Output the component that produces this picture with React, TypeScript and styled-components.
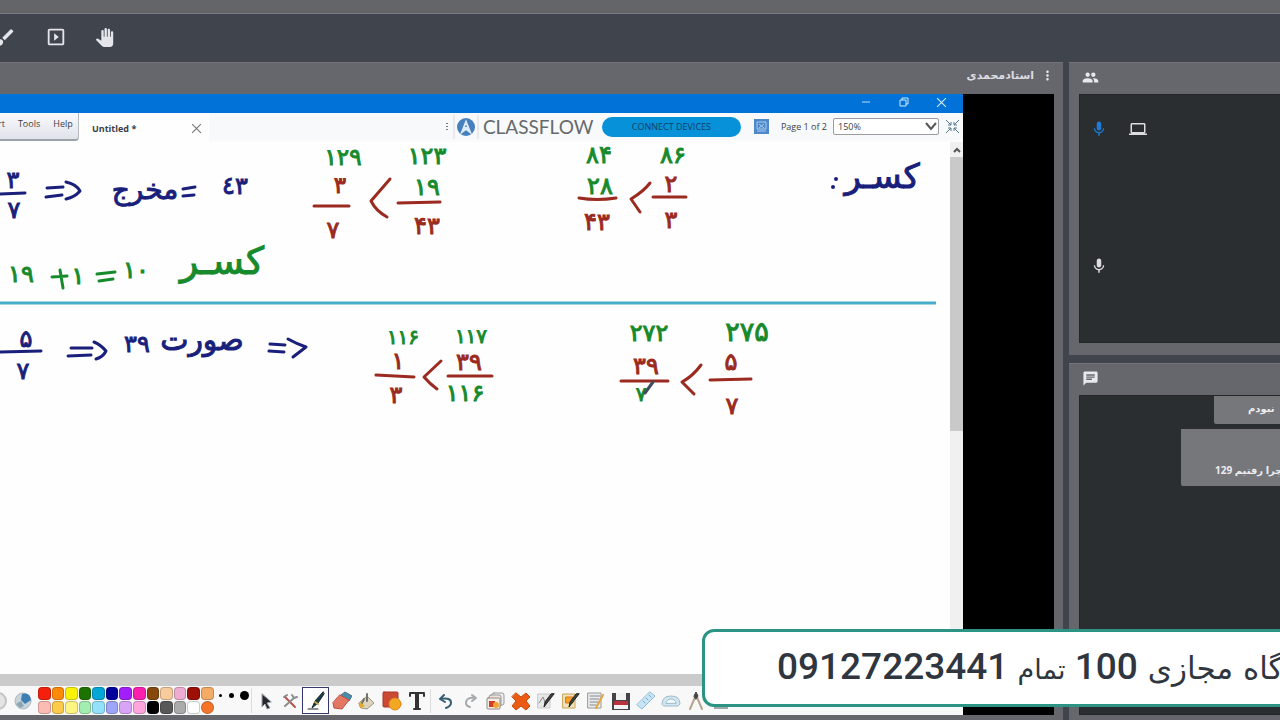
import React from 'react';
import styled, { createGlobalStyle } from 'styled-components';
import { MdBrush, MdSlideshow, MdPanTool, MdMoreVert, MdPeople, MdMic, MdComputer, MdChat } from 'react-icons/md';

const Global = createGlobalStyle`
  * { box-sizing: border-box; }
  html, body, #root { height: 100%; }
  body { margin: 0; overflow: hidden; background: #40444c; font-family: "Open Sans", "DejaVu Sans", sans-serif; }
  button { font: inherit; color: inherit; background: none; border: 0; padding: 0; }
`;

const Page = styled.div`
  position: relative;
  height: 100%;
  display: flex;
  flex-direction: column;
  overflow: hidden;
`;
const TopStrip = styled.div`
  flex: none;
  height: 14px;
  background: #646569;
  border-bottom: 1px solid #777a80;
`;
const Header = styled.header`
  flex: none;
  height: 48px;
  display: flex;
  align-items: center;
  gap: 26px;
  padding-bottom: 2px;
  background: #40444c;
  overflow: hidden;
`;
const HeaderButton = styled.button`
  width: 22px;
  height: 22px;
  flex: none;
  display: flex;
  align-items: center;
  justify-content: center;
  color: #e4e6ec;
  font-size: 22px;
  &:first-child { margin-left: -6px; font-size: 23px; }
  &:nth-child(2) { margin-left: 3px; }
`;
const Main = styled.main`
  flex: 1;
  min-height: 0;
  display: flex;
  gap: 6px;
`;
const Pod = styled.section<{ $grow?: boolean; $h?: number }>`
  display: flex;
  flex-direction: column;
  min-width: 0;
  min-height: 0;
  flex: ${p => (p.$grow ? '1' : 'none')};
  ${p => (p.$h ? `height: ${p.$h}px;` : '')}
  background: #66676c;
  border-top: 1px solid #72747a;
`;
const PodHeader = styled.div<{ $end?: boolean }>`
  flex: none;
  height: 31px;
  display: flex;
  align-items: center;
  justify-content: ${p => (p.$end ? 'flex-end' : 'flex-start')};
  gap: 6px;
  padding: ${p => (p.$end ? '0 8px 6px 0' : '0 13px 2px')};
  color: #e8e8ee;
  font-size: 17px;
`;
const UserName = styled.span`
  font: 700 11px "DejaVu Sans", sans-serif;
  color: #dcdce2;
`;
const IconButton = styled.button`
  display: flex;
`;
const ShareBody = styled.div`
  flex: 1;
  min-height: 0;
  display: flex;
  margin: 0 9px 5px 0;
  background: #000;
`;
const Side = styled.aside`
  flex: none;
  width: 211px;
  display: flex;
  flex-direction: column;
  gap: 8px;
`;
const DarkBody = styled.div<{ $bottom: number }>`
  flex: 1;
  min-height: 0;
  margin: 0 0 ${p => p.$bottom}px 10px;
  background: #2b2e31;
  border: 1px solid #232629;
  border-right: 0;
  overflow: hidden;
`;
const Attendees = styled(DarkBody)`
  display: flex;
  flex-direction: column;
  gap: 119px;
  padding: 25px 10px;
`;
const Attendee = styled.div`
  display: flex;
  align-items: center;
  gap: 21px;
  height: 18px;
  color: #dddde0;
  font-size: 18px;
  .live { color: #1f7ad6; }
`;
const Messages = styled(DarkBody)`
  display: flex;
  flex-direction: column;
  align-items: flex-end;
  gap: 5px;
`;
const Message = styled.div<{ $w: number; $h: number }>`
  width: ${p => p.$w}px;
  height: ${p => p.$h}px;
  flex: none;
  display: flex;
  align-items: flex-end;
  padding: 0 0 7px 34px;
  background: #75777b;
  border-radius: 0 0 0 2px;
  color: #ececf0;
  font: 700 10px/18px "Open Sans", "DejaVu Sans", sans-serif;
  white-space: nowrap;
  overflow: hidden;
`;

const Board = styled.div`
  flex: 1;
  min-width: 0;
  margin-right: 91px;
  display: flex;
  flex-direction: column;
  background: #fefefe;
`;
const TitleBar = styled.div`
  flex: none;
  height: 19px;
  display: flex;
  align-items: center;
  justify-content: flex-end;
  gap: 26px;
  padding-right: 16px;
  padding-bottom: 3px;
  background: #0072d8;
  svg { display: block; }
`;
const MenuRow = styled.div`
  flex: none;
  height: 29px;
  display: flex;
  align-items: flex-start;
  background: #fbfbfc;
  color: #3c3f44;
`;
const Menus = styled.nav`
  width: 79px;
  height: 28px;
  flex: none;
  display: flex;
  align-items: flex-start;
  gap: 13px;
  padding-top: 3px;
  overflow: hidden;
  background: linear-gradient(#fafafc, #dfe3ea);
  border-right: 1px solid #b5b9c0;
  border-bottom: 2px solid #9da1aa;
  border-radius: 0 0 4px 0;
  font-size: 9px;
  line-height: 16px;
  button { flex: none; }
  button:first-child { margin-left: -2px; }
`;
const Tab = styled.div`
  width: 130px;
  flex: none;
  height: 29px;
  display: flex;
  align-items: center;
  justify-content: space-between;
  padding: 2px 7px 0 13px;
  background: #fefefe;
  font-size: 9px;
  font-weight: 700;
`;
const FlowBar = styled.div`
  flex: 1;
  height: 27px;
  display: flex;
  align-items: center;
  justify-content: flex-end;
  padding-right: 3px;
  background: #f8f9fb;
  font-size: 10px;
  svg { flex: none; }
`;
const Brand = styled.span`
  width: 122px;
  padding-left: 3px;
  font: 400 19px Lato, sans-serif;
  color: #66696c;
`;
const Connect = styled.button`
  width: 139px;
  height: 20px;
  flex: none;
  border-radius: 10px;
  background: #0791d8;
  color: #123f66;
  font-size: 9px;
  margin-right: 13px;
`;
const PageLabel = styled.label`
  margin: 0 6px 0 12px;
  font-size: 9px;
  white-space: nowrap;
`;
const ZoomWrap = styled.span`
  position: relative;
  display: flex;
  align-items: center;
  margin-right: 6px;
  svg { position: absolute; right: 1px; pointer-events: none; }
`;
const Zoom = styled.select`
  appearance: none;
  width: 106px;
  height: 17px;
  padding: 0 4px;
  border: 1px solid #9a9ca0;
  border-radius: 2px;
  background: #fff;
  color: #3c3f44;
  font: 9px "Open Sans", sans-serif;
`;
const CanvasRow = styled.div`
  flex: 1;
  min-height: 0;
  display: flex;
  overflow: hidden;
`;
const CanvasArea = styled.div`
  flex: 1;
  min-width: 0;
  overflow: hidden;
`;
const Ink = styled.svg`
  display: block;
  text { font-family: "DejaVu Sans", sans-serif; text-anchor: middle; }
`;
const Scroll = styled.div`
  width: 13px;
  flex: none;
  background: #f0f0f0;
`;
const ScrollUp = styled.button`
  width: 13px;
  height: 15px;
  display: flex;
  align-items: center;
  justify-content: center;
`;
const Thumb = styled.div`
  height: 274px;
  background: #c9c9c9;
`;
const GreyBar = styled.div`
  flex: none;
  height: 12px;
  background: #cbcbcb;
`;
const Tools = styled.div`
  flex: none;
  height: 29px;
  display: flex;
  align-items: center;
  background: #f8f8f8;
  overflow: hidden;
`;
const Worlds = styled.div`
  width: 45px;
  flex: none;
  display: flex;
  gap: 5px;
  margin-left: -12px;
  margin-right: 5px;
`;
const Palette = styled.div`
  width: 162px;
  flex: none;
  display: grid;
  grid-template-columns: repeat(12, 1fr);
  gap: 1px;
`;
const Swatch = styled.button<{ $c: string; $round?: boolean }>`
  height: 13px;
  border: 1px solid #0003;
  border-radius: ${p => (p.$round ? '7px' : '4px')};
  background: ${p => p.$c};
`;
const Current = styled.div`
  width: 13px;
  flex: none;
  display: grid;
  gap: 1px;
  margin-left: 1px;
`;
const Dots = styled.div`
  width: 38px;
  height: 25px;
  flex: none;
  display: flex;
  justify-content: space-between;
  padding: 0 2px 10px 5px;
  align-items: center;
  border-right: 1px solid #ddd;
`;
const Dot = styled.button<{ $s: number }>`
  width: ${p => p.$s}px;
  height: ${p => p.$s}px;
  border-radius: 50%;
  background: #000;
`;
const ToolButton = styled.button<{ $active?: boolean }>`
  width: ${p => (p.$active ? 27 : 25)}px;
  height: 27px;
  flex: none;
  display: flex;
  align-items: center;
  justify-content: center;
  border: 1px solid ${p => (p.$active ? '#34386a' : 'transparent')};
  background: ${p => (p.$active ? '#fff' : 'none')};
`;
const Split = styled.div`
  width: 2px;
  height: 24px;
  margin-right: 2px;
  flex: none;
  border-right: 1px solid #ddd;
`;
const Banner = styled.div`
  position: absolute;
  right: -20px;
  bottom: 13px;
  width: 598px;
  height: 78px;
  display: flex;
  align-items: center;
  padding: 0 0 4px 72px;
  border: 3px solid #2b9484;
  border-radius: 12px;
  background: #fff;
  color: #303640;
  font: 500 37px Roboto, "DejaVu Sans", sans-serif;
  white-space: nowrap;
  overflow: hidden;
`;
const BannerWord = styled.span<{ $size: number }>`
  font: 400 ${p => p.$size}px "DejaVu Sans", sans-serif;
`;

const NAVY = '#1a1f7c';
const RED = '#9b2a20';
const GREEN = '#178a2c';

type Note = [string, number, number, string, number?];
const notes: Note[] = [
  ['۳', 13, 188, NAVY], ['۷', 14, 218, NAVY],
  ['مخرج', 145, 199, NAVY, 28], ['٤٣', 235, 194, NAVY],
  ['۱۲۹', 343, 165, GREEN, 23], ['۱۲۳', 427, 164, GREEN, 24],
  ['۳', 340, 193, RED, 23], ['۷', 333, 238, RED],
  ['۱۹', 427, 195, GREEN], ['۴۳', 427, 234, RED],
  ['۸۴', 599, 163, GREEN], ['۲۸', 600, 194, GREEN], ['۴۳', 597, 230, RED],
  ['۸۶', 673, 163, GREEN], ['۲', 671, 192, RED], ['۳', 671, 228, RED],
  ['کسـر', 882, 188, NAVY, 34],
  ['۱۹', 21, 282, GREEN], ['۱', 78, 284, GREEN], ['۱۰', 136, 278, GREEN],
  ['کسـر', 222, 274, GREEN, 38],
  ['۵', 26, 347, NAVY], ['۷', 23, 379, NAVY],
  ['۳۹', 137, 352, NAVY], ['صورت', 202, 350, NAVY, 30],
  ['۱۱۶', 403, 344, GREEN, 20], ['۱۱۷', 471, 343, GREEN, 20],
  ['۱', 398, 369, RED], ['۳', 396, 403, RED],
  ['۳۹', 469, 370, RED], ['۱۱۶', 465, 401, GREEN],
  ['۲۷۲', 649, 341, GREEN], ['۳۹', 646, 374, RED], ['۷', 641, 401, GREEN, 20],
  ['۲۷۵', 747, 341, GREEN, 27], ['۵', 731, 370, RED], ['۷', 732, 414, RED],
];
const strokes: [string, string][] = [
  ['M0 194L25 193', NAVY],
  ['M47 188L63 187M46 197L62 195M66 182Q76 184 80 191Q75 197 66 199', NAVY],
  ['M183 189L195 187M183 196L194 195', NAVY],
  ['M314 206H349', RED], ['M390 179L371 201Q376 211 387 217', RED], ['M398 203L440 202', RED],
  ['M579 198Q597 201 616 198', RED], ['M650 183Q644 191 631 199L640 212', RED], ['M653 197H686', RED],
  ['M52 277L67 276M60 270L63 288', GREEN], ['M97 274L115 272M99 281L113 279', GREEN],
  ['M0 352L41 351', NAVY],
  ['M71 348L92 348M68 356L91 355M94 342Q101 345 106 351Q103 357 96 359', NAVY],
  ['M270 344L285 345M269 351L284 352M288 339Q297 344 306 347L293 357', NAVY],
  ['M376 375L414 377', RED], ['M441 361L424 377Q430 384 437 389', RED], ['M448 376H492', RED],
  ['M621 381L668 381', RED], ['M701 365Q693 376 682 382L694 394', RED], ['M710 380L751 379', RED],
];

const palette = [
  '#f5200c', '#ff8a08', '#fbf20a', '#1d7300', '#04a6d8', '#00009a', '#a31ffa', '#fb1fae', '#87480c', '#f7cb9b', '#eeacd2', '#9c1008',
  '#fcbcb4', '#fdcb4c', '#fcf581', '#a2eeb0', '#93e1fa', '#9fa5f8', '#d9a4f8', '#fda5dc', '#000', '#585858', '#ababab', '#fff',
];

const Svg = ({ children, size = 20 }: { children: React.ReactNode; size?: number }) => (
  <svg width={size} height={size} viewBox="0 0 20 20" fill="none" strokeLinecap="round" strokeLinejoin="round">{children}</svg>
);
const pencil = <path d="M18 3L11 12L8 16L9 11L15 3Z" fill="#3d4246" stroke="#222" />;

const toolsA: [string, React.ReactNode][] = [
  ['Select', <><path d="M7 3V16L10 13L12 18L15 17L12 12L16 11Z" fill="#25272c" stroke="#a0a5ae" /></>],
  ['Options', <><path d="M5 6L15 16" stroke="#b95045" strokeWidth="2" /><path d="M14 7L5 15M12 4L14 7L17 6" stroke="#8a8d92" strokeWidth="2" /><path d="M4 6L7 4" stroke="#888" strokeWidth="2" /></>],
  ['Pen', <><path d="M17 1L9 10L6 17L12 12L18 3Z" fill="#173e43" stroke="#16252b" /><path d="M9 11L12 13" stroke="#c7a64b" strokeWidth="2" /><path d="M2 18H12" stroke="#222" /></>],
  ['Eraser', <><path d="M9 4L13 1L20 5L17 10L10 8Z" fill="#4b8cac" stroke="#46748b" /><path d="M8 4L17 9L10 18L2 17L1 12Z" fill="#e47761" stroke="#bd513f" /></>],
  ['Fill', <><path d="M2 12L10 5L17 12L10 18L4 17Z" fill="#dcd4bc" stroke="#9a9787" /><path d="M10 10V3M7 8L4 14" stroke="#73716a" strokeWidth="2" /><path d="M3 11Q1 15 4 17L8 15Z" fill="#e3aa30" /></>],
  ['Shapes', <><rect x="1" y="1" width="15" height="15" rx="1" fill="#cc4933" stroke="#a93b28" /><circle cx="13" cy="13" r="6" fill="#f2a723" stroke="#df8718" /></>],
  ['Text', <><path d="M3 3V5M3 2H17M17 3V5" stroke="#333" strokeWidth="2" /><path d="M10 3V18" stroke="#333" strokeWidth="4" strokeLinecap="butt" /><path d="M7 18H13" stroke="#333" strokeWidth="2" /></>],
];
const toolsB: [string, React.ReactNode][] = [
  ['Undo', <><path d="M8 4L4 8L9 11M5 8Q15 6 15 12Q15 15 10 17" stroke="#345e73" strokeWidth="2" /></>],
  ['Redo', <><path d="M11 4L15 7L11 10M14 7Q5 6 5 12Q5 15 9 16" stroke="#a6aaad" strokeWidth="2" /></>],
  ['Clear', <><rect x="6" y="2" width="12" height="12" rx="2" fill="#eee" stroke="#999" /><rect x="3" y="4" width="12" height="12" rx="2" fill="#f1e2d8" stroke="#999" /><rect x="1" y="7" width="13" height="11" rx="1" fill="#f8eee7" stroke="#938a87" /><path d="M3 16V10H9V16Z" fill="#d23d25" /><circle cx="10" cy="14" r="3" fill="#f1a533" /></>],
  ['Delete', <path d="M5 2L10 6L15 2L19 6L15 10L19 15L15 19L10 15L5 19L1 15L5 10L1 6Z" fill="#ec5b13" stroke="#c74a0b" />],
  ['Annotate', <><path d="M2 3H14V17H2Z" fill="#e7e7e7" stroke="#c8c8c8" /><path d="M3 12L7 6L9 11L12 7" stroke="#888" />{pencil}</>],
  ['Desktop', <><path d="M2 3H14V17H2Z" fill="#eee3bd" stroke="#c9a357" /><path d="M5 6H12V12H5Z" fill="#f6a029" stroke="#d17a16" />{pencil}</>],
  ['Notes', <><path d="M2 2H15V17H2Z" fill="#e9ecea" stroke="#969b98" /><path d="M4 5H14M4 8H13M4 11H12M4 14H10" stroke="#889" /><path d="M17 4L10 17" stroke="#e8a340" strokeWidth="2" /></>],
  ['Save', <><path d="M1 2H19V19H1Z" fill="#454347" /><path d="M5 2H15V9H5Z" fill="#f2f2f2" /><path d="M3 10H17V14H3Z" fill="#b8323c" /><path d="M3 14H17V18H3Z" fill="#f3f3f3" /></>],
  ['Ruler', <><path d="M14 1L19 5L6 18L1 14Z" fill="#c9e5f5" stroke="#8cbcd9" /><path d="M13 4L15 6M10 7L12 9M7 10L9 12" stroke="#76a9c9" /></>],
  ['Protractor', <><path d="M1 13Q1 5 10 5Q19 5 19 13L17 15H3Z" fill="#d3e5ee" stroke="#9bbccd" /><path d="M5 12Q6 8 10 8Q14 8 15 12Z" fill="#f5fafc" stroke="#9bbccd" /></>],
  ['Compass', <><path d="M10 4L4 18M10 4L16 18" stroke="#b6a58d" strokeWidth="2" /><path d="M8 5L10 1L12 5L10 8Z" fill="#444" stroke="#444" /></>],
  ['Calculator', <rect x="3" y="3" width="14" height="15" fill="#9baaa6" />],
];

const Cross = ({ c, s }: { c: string; s: number }) => (
  <svg width={s} height={s} viewBox="0 0 10 10" stroke={c}><path d="M1 1L9 9M9 1L1 9" /></svg>
);

export default function App() {
  return (
    <Page>
      <Global />
      <TopStrip />
      <Header>
        <HeaderButton aria-label="Draw"><MdBrush /></HeaderButton>
        <HeaderButton aria-label="Present"><MdSlideshow /></HeaderButton>
        <HeaderButton aria-label="Raise hand"><MdPanTool size={19} /></HeaderButton>
      </Header>
      <Main>
        <Pod $grow>
          <PodHeader $end>
            <UserName dir="rtl">استادمحمدی</UserName>
            <IconButton aria-label="More"><MdMoreVert size={15} /></IconButton>
          </PodHeader>
          <ShareBody>
            <Board>
              <TitleBar>
                <IconButton aria-label="Minimize"><svg width="12" height="10" stroke="#b9dcf8"><path d="M2 5H10" /></svg></IconButton>
                <IconButton aria-label="Restore"><svg width="12" height="10" stroke="#d5ecfd" fill="none"><path d="M2 3H8V9H2ZM4 3V1H10V7H8" /></svg></IconButton>
                <IconButton aria-label="Close"><Cross c="#d5ecfd" s={11} /></IconButton>
              </TitleBar>
              <MenuRow>
                <Menus>
                  <button>rt</button>
                  <button>Tools</button>
                  <button>Help</button>
                </Menus>
                <Tab>Untitled * <IconButton aria-label="Close tab"><Cross c="#777" s={11} /></IconButton></Tab>
                <FlowBar>
                  <svg width="36" height="24" viewBox="0 0 36 24" fill="none">
                    <path d="M3 8V9M3 11V12M3 14V15" stroke="#777" strokeWidth="2" />
                    <path d="M10 0V24M34 0V24" stroke="#d9dce0" />
                    <circle cx="22" cy="12" r="9" fill="#4580bd" />
                    <path d="M18 17L22 7L26 17L22 14ZM20 13H24" stroke="#dcebf7" strokeWidth="2" />
                  </svg>
                  <Brand>CLASSFLOW</Brand>
                  <Connect>CONNECT DEVICES</Connect>
                  <svg width="15" height="15" viewBox="0 0 15 15" fill="none">
                    <rect width="15" height="15" fill="#4d88c8" />
                    <path d="M3 3H12V10H3ZM5 5L10 9M10 5L5 9M3 12H12" stroke="#a9cbee" />
                  </svg>
                  <PageLabel htmlFor="zoom">Page 1 of 2</PageLabel>
                  <ZoomWrap>
                    <Zoom id="zoom" defaultValue="150%"><option>150%</option></Zoom>
                    <svg width="14" height="9" fill="none" stroke="#555" strokeWidth="2"><path d="M2 1L7 7L12 1" /></svg>
                  </ZoomWrap>
                  <IconButton aria-label="Fit page">
                    <svg width="15" height="15" fill="none" stroke="#56788f" strokeWidth="1"><path d="M1 1L6 6M3 6H6V3M14 1L9 6M9 3V6H12M1 14L6 9M3 9H6V12M14 14L9 9M9 12V9H12" /></svg>
                  </IconButton>
                </FlowBar>
              </MenuRow>
              <CanvasRow>
                <CanvasArea>
                  <Ink width="950" height="533" viewBox="0 142 950 533">
                    <path d="M0 303H936" stroke="#46aecb" strokeWidth="3" />
                    {strokes.map(([d, c], i) => (
                      <path key={i} d={d} stroke={c} strokeWidth="3" fill="none" strokeLinecap="round" strokeLinejoin="round" />
                    ))}
                    {notes.map(([t, x, y, c, s = 24], i) => (
                      <text key={i} x={x} y={y} fill={c} stroke={c} strokeWidth="1" fontSize={s}>{t}</text>
                    ))}
                    <circle cx="836" cy="179" r="2" fill={NAVY} />
                    <circle cx="833" cy="187" r="2" fill={NAVY} />
                    <path d="M653 382L645 393" stroke="#3f4b5e" strokeWidth="3" strokeLinecap="round" />
                  </Ink>
                </CanvasArea>
                <Scroll>
                  <ScrollUp aria-label="Scroll up"><svg width="8" height="6" fill="none" stroke="#555" strokeWidth="2"><path d="M1 5L4 2L7 5" /></svg></ScrollUp>
                  <Thumb />
                </Scroll>
              </CanvasRow>
              <GreyBar />
              <Tools>
                <Worlds>
                  <Svg><circle cx="10" cy="10" r="8" fill="#e4e4e4" stroke="#c4c4c4" strokeWidth="2" /></Svg>
                  <Svg><circle cx="10" cy="10" r="8" fill="#c9d4da" stroke="#aebbc2" /><path d="M9 3Q17 1 18 9L12 13L8 9Z" fill="#3d7fb2" /><path d="M3 13L8 10L11 15L7 17Z" fill="#8aa5b3" /></Svg>
                </Worlds>
                <Palette>{palette.map(c => <Swatch key={c} $c={c} aria-label={c} />)}</Palette>
                <Current>
                  <Swatch $c="#f3ab66" aria-label="Pen colour" />
                  <Swatch $c="#f4752a" $round aria-label="Fill colour" />
                </Current>
                <Dots>
                  <Dot $s={3} aria-label="Thin" /><Dot $s={5} aria-label="Medium" /><Dot $s={9} aria-label="Thick" />
                </Dots>
                {toolsA.map(([n, g]) => <ToolButton key={n} aria-label={n} $active={n === 'Pen'}><Svg>{g}</Svg></ToolButton>)}
                <Split />
                {toolsB.map(([n, g]) => <ToolButton key={n} aria-label={n}><Svg>{g}</Svg></ToolButton>)}
              </Tools>
            </Board>
          </ShareBody>
        </Pod>
        <Side>
          <Pod $h={293}>
            <PodHeader><MdPeople /></PodHeader>
            <Attendees $bottom={12}>
              <Attendee><MdMic className="live" /><MdComputer /></Attendee>
              <Attendee><MdMic /></Attendee>
            </Attendees>
          </Pod>
          <Pod $grow>
            <PodHeader><MdChat /></PodHeader>
            <Messages $bottom={5}>
              <Message $w={66} $h={28}><span dir="rtl">نبودم</span></Message>
              <Message $w={99} $h={57}><span dir="rtl">چرا رفتیم 129</span></Message>
            </Messages>
          </Pod>
        </Side>
      </Main>
      <Banner>
        <span dir="rtl">
          <BannerWord $size={31}>گاه مجازی </BannerWord> 100 <BannerWord $size={27}>تمام</BannerWord> 09127223441
        </span>
      </Banner>
    </Page>
  );
}
